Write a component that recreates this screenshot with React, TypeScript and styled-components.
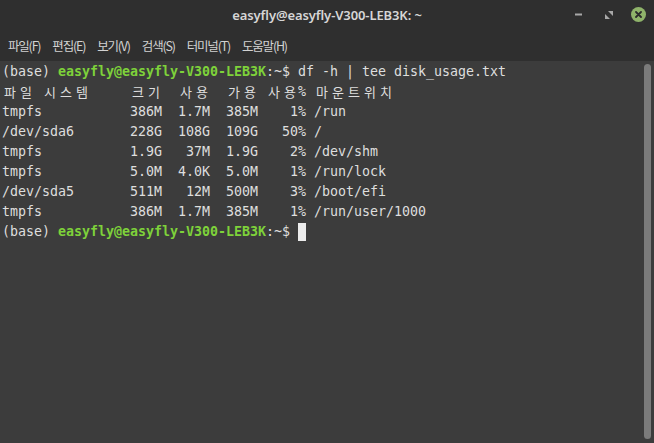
import styled, { createGlobalStyle } from 'styled-components';

const GlobalStyle = createGlobalStyle`
  html, body {
    margin: 0;
    padding: 0;
    background: #2f2f2f;
    overflow: hidden;
  }
`;

// Styled components
const Window = styled.div`
  width: 654px;
  height: 443px;
  display: flex;
  flex-direction: column;
  background: #2f2f2f;
  font-family: 'Noto Sans', 'Noto Sans CJK KR', sans-serif;
`;

const TitleBar = styled.div`
  height: 29px;
  display: flex;
  align-items: center;
  justify-content: center;
  position: relative;
`;

const Title = styled.div`
  color: #d6d6d6;
  font-size: 13px;
  font-weight: 600;
  letter-spacing: -0.1px;
`;

const WindowButtons = styled.div`
  position: absolute;
  right: 8px;
  top: 0;
  height: 29px;
  display: flex;
  align-items: center;
  gap: 14px;
`;

const WinButton = styled.div`
  width: 16px;
  height: 16px;
  display: flex;
  align-items: center;
  justify-content: center;
`;

const CloseButton = styled.div`
  width: 15px;
  height: 15px;
  border-radius: 50%;
  background: #8fb36a;
  display: flex;
  align-items: center;
  justify-content: center;
`;

const MenuBar = styled.div`
  height: 32px;
  display: flex;
  align-items: center;
  padding-left: 8px;
  gap: 12px;
`;

const MenuItem = styled.div`
  color: #d2d2d2;
  font-size: 12.5px;
  font-family: 'Noto Sans CJK KR', 'Noto Sans', sans-serif;
  letter-spacing: -1.2px;
`;

const Terminal = styled.div`
  flex: 1;
  display: flex;
  background: #3c3c3c;
  min-height: 0;
`;

const Screen = styled.div`
  flex: 1;
  padding: 1px 0 0 2px;
`;

const Line = styled.div`
  display: flex;
  height: 20px;
  line-height: 20px;
  white-space: pre;
`;

const Cell = styled.span<{ $wide?: boolean; $green?: boolean }>`
  display: inline-block;
  width: ${(p) => (p.$wide ? '16px' : '8px')};
  text-align: center;
  overflow: visible;
  color: ${(p) => (p.$green ? '#7ed23a' : '#dedede')};
  font-weight: ${(p) => (p.$green ? 700 : 400)};
  font-family: ${(p) =>
    p.$wide ? "'Noto Sans CJK KR', sans-serif" : "'DejaVu Sans Mono', monospace"};
  font-size: ${(p) => (p.$wide ? '13px' : '13.3px')};
`;

const Cursor = styled.span`
  display: inline-block;
  width: 8px;
  height: 18px;
  margin-top: 1px;
  background: #ececec;
`;

const ScrollTrack = styled.div`
  width: 7px;
  padding: 3px 3px 4px 0;
  display: flex;
`;

const ScrollThumb = styled.div`
  flex: 1;
  border-radius: 4px;
  background: #7b7b7b;
`;

const WIDE = /[\u1100-\u11ff\u3130-\u318f\uac00-\ud7af]/;

type Seg = { text: string; green?: boolean };

const PROMPT: Seg[] = [
  { text: '(base) ' },
  { text: 'easyfly@easyfly-V300-LEB3K', green: true },
  { text: ':~$ ' },
];

const LINES: Seg[][] = [
  [...PROMPT, { text: 'df -h | tee disk_usage.txt' }],
  [{ text: '파일 시스템     크기  사용  가용 사용% 마운트위치' }],
  [{ text: 'tmpfs           386M  1.7M  385M    1% /run' }],
  [{ text: '/dev/sda6       228G  108G  109G   50% /' }],
  [{ text: 'tmpfs           1.9G   37M  1.9G    2% /dev/shm' }],
  [{ text: 'tmpfs           5.0M  4.0K  5.0M    1% /run/lock' }],
  [{ text: '/dev/sda5       511M   12M  500M    3% /boot/efi' }],
  [{ text: 'tmpfs           386M  1.7M  385M    1% /run/user/1000' }],
];

const MENU = ['파일(F)', '편집(E)', '보기(V)', '검색(S)', '터미널(T)', '도움말(H)'];

function TermLine({ segs, cursor }: { segs: Seg[]; cursor?: boolean }) {
  return (
    <Line>
      {segs.flatMap((seg, si) =>
        Array.from(seg.text).map((ch, ci) => (
          <Cell key={`${si}-${ci}`} $wide={WIDE.test(ch)} $green={seg.green}>
            {ch}
          </Cell>
        ))
      )}
      {cursor && <Cursor />}
    </Line>
  );
}

export default function App() {
  return (
    <>
      <GlobalStyle />
      <Window>
        <TitleBar>
          <Title>easyfly@easyfly-V300-LEB3K: ~</Title>
          <WindowButtons>
            <WinButton>
              <svg width="8" height="3" viewBox="0 0 8 3">
                <rect x="0" y="0.5" width="7" height="2" fill="#a8a8a8" />
              </svg>
            </WinButton>
            <WinButton>
              <svg width="8" height="8" viewBox="0 0 8 8">
                <path d="M0 8 L0 3 L5 8 Z" fill="#a8a8a8" />
                <path d="M8 0 L8 5 L3 0 Z" fill="#a8a8a8" />
              </svg>
            </WinButton>
            <CloseButton>
              <svg width="7" height="7" viewBox="0 0 7 7">
                <path d="M1 1 L6 6 M6 1 L1 6" stroke="#2b2b2b" strokeWidth="1.8" strokeLinecap="round" />
              </svg>
            </CloseButton>
          </WindowButtons>
        </TitleBar>
        <MenuBar>
          {MENU.map((m) => (
            <MenuItem key={m}>{m}</MenuItem>
          ))}
        </MenuBar>
        <Terminal>
          <Screen>
            {LINES.map((segs, i) => (
              <TermLine key={i} segs={segs} />
            ))}
            <TermLine segs={PROMPT} cursor />
          </Screen>
          <ScrollTrack>
            <ScrollThumb />
          </ScrollTrack>
        </Terminal>
      </Window>
    </>
  );
}
